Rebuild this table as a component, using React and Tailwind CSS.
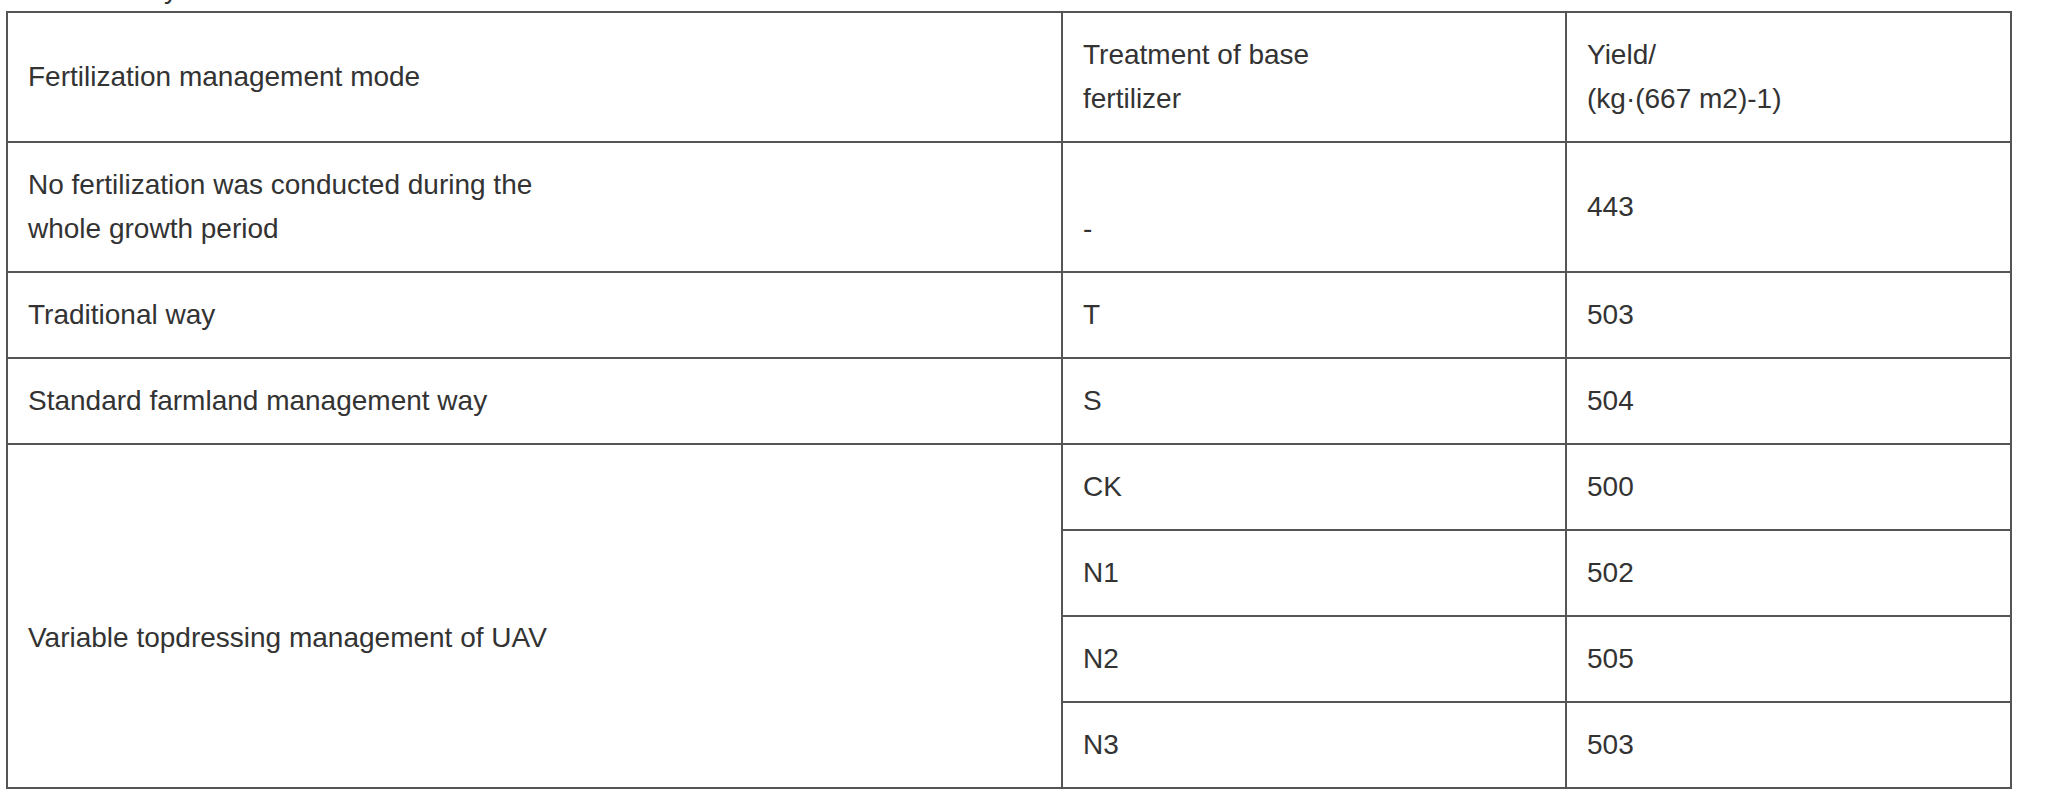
const rows = [
    { mode: ['No fertilization was conducted during the', 'whole growth period'], base: ['', '-'], yieldVal: '443' },
    { mode: ['Traditional way'], base: ['T'], yieldVal: '503' },
    { mode: ['Standard farmland management way'], base: ['S'], yieldVal: '504' },
];

const uav = [
    { base: 'CK', yieldVal: '500' },
    { base: 'N1', yieldVal: '502' },
    { base: 'N2', yieldVal: '505' },
    { base: 'N3', yieldVal: '503' },
];

const cell = 'border-2 border-[#555] px-5 py-5 align-middle text-left font-normal';

const Lines = ({ lines }) =>
    lines.map((line, i) => (
        <div key={i} className="h-[44px] whitespace-nowrap">
            {line}
        </div>
    ));

export default function App() {
    return (
        <div
            className="w-[2052px] h-[792px] bg-white text-[#333] text-[28px] leading-[44px] overflow-hidden"
            style={{ fontFamily: '"Liberation Sans", Arial, sans-serif' }}
        >
            {/* tail of the caption line above, cut off by the crop */}
            <div className="h-[11px] overflow-hidden">
                <div className="-mt-[33px] pl-[164px]">y</div>
            </div>

            <table className="ml-[6px] w-[2004px] table-fixed border-collapse">
                <colgroup>
                    <col className="w-[1055px]" />
                    <col className="w-[504px]" />
                    <col className="w-[445px]" />
                </colgroup>
                <thead>
                    <tr>
                        <th className={cell}>
                            <Lines lines={['Fertilization management mode']} />
                        </th>
                        <th className={cell}>
                            <Lines lines={['Treatment of base', 'fertilizer']} />
                        </th>
                        <th className={cell}>
                            <Lines lines={['Yield/', '(kg·(667 m2)-1)']} />
                        </th>
                    </tr>
                </thead>
                <tbody>
                    {rows.map((row, i) => (
                        <tr key={i}>
                            <td className={cell}>
                                <Lines lines={row.mode} />
                            </td>
                            <td className={cell}>
                                <Lines lines={row.base} />
                            </td>
                            <td className={cell}>
                                <Lines lines={[row.yieldVal]} />
                            </td>
                        </tr>
                    ))}
                    {uav.map((row, i) => (
                        <tr key={row.base}>
                            {i === 0 ? (
                                <td className={cell} rowSpan={uav.length}>
                                    <Lines lines={['', 'Variable topdressing management of UAV']} />
                                </td>
                            ) : null}
                            <td className={cell}>
                                <Lines lines={[row.base]} />
                            </td>
                            <td className={cell}>
                                <Lines lines={[row.yieldVal]} />
                            </td>
                        </tr>
                    ))}
                </tbody>
            </table>
        </div>
    );
}
